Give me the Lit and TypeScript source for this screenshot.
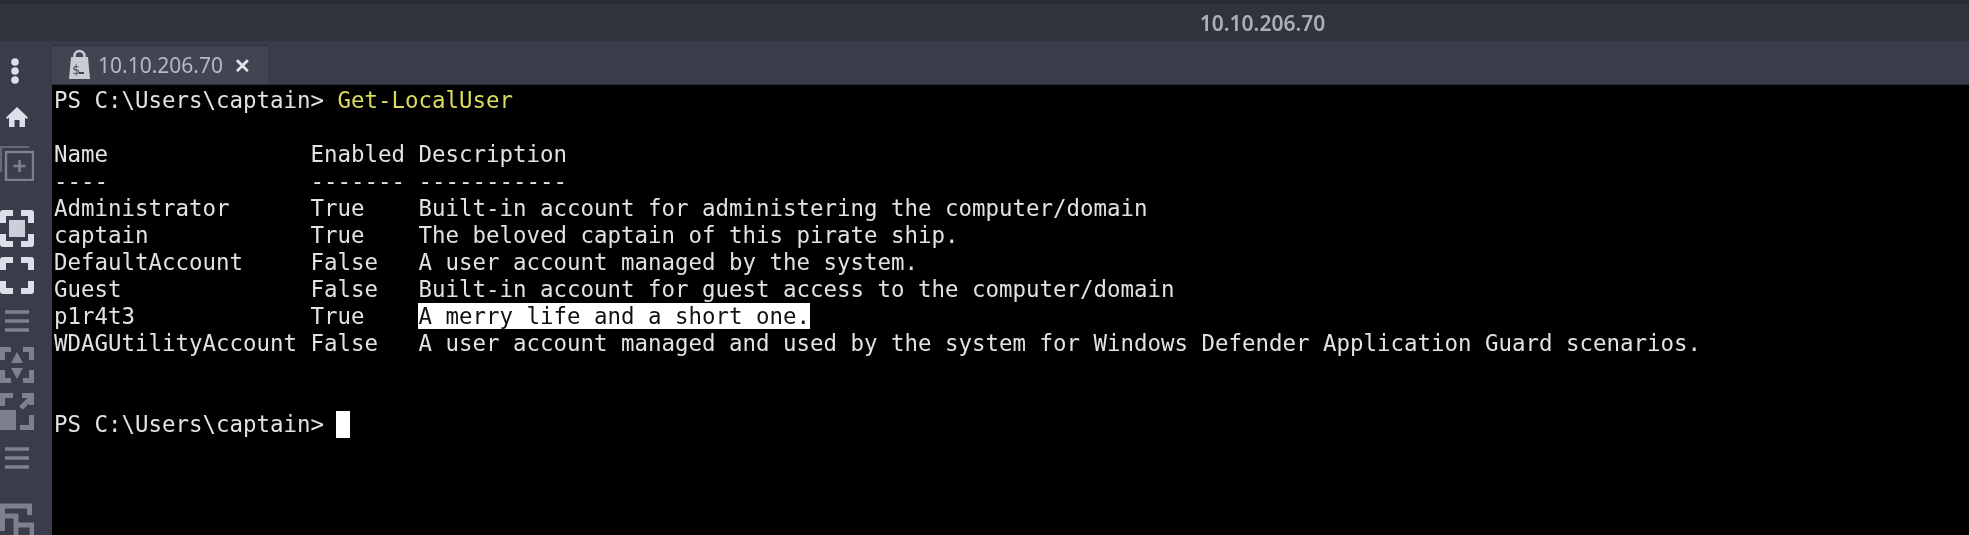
import { LitElement, html, css, svg } from "lit";
import { customElement } from "lit/decorators.js";

const bright = "#dcdfe7";
const dim = "#7d808d";

const corners = (c: string) => svg`<path fill="none" stroke="${c}" stroke-width="6" stroke-linejoin="round" d="M3 13V3H13M21 3H31V13M31 24V34H21M13 34H3V24"/>`;

const railIcons = [
  html`<svg class="shift" width="12" height="26" viewBox="0 0 12 26"><g fill="${bright}"><circle cx="6" cy="4" r="3.800"/><circle cx="6" cy="13" r="3.800"/><circle cx="6" cy="22" r="3.800"/></g></svg>`,
  html`<svg width="22" height="20" viewBox="0 0 22 20"><path fill="${bright}" d="M11 0 22 10.500 20.500 12 19 10.600V20H13.500V13H8.500V20H3V10.600L1.500 12 0 10.500Z"/></svg>`,
  html`<svg width="34" height="36" viewBox="0 0 34 36"><path fill="none" stroke="#656976" stroke-width="2" d="M1 27V2H29"/><rect x="6" y="7" width="27" height="28" fill="#3a3d4a" stroke="${dim}" stroke-width="2.400"/><path stroke="${dim}" stroke-width="2.600" d="M19.500 15V27M13.500 21H25.500"/></svg>`,
  html`<svg width="34" height="37" viewBox="0 0 34 37">${corners(bright)}<rect x="9" y="10" width="16" height="17" fill="${bright}" opacity=".9"/></svg>`,
  html`<svg width="34" height="37" viewBox="0 0 34 37">${corners(bright)}</svg>`,
  html`<svg width="24" height="22" viewBox="0 0 24 22"><path stroke="${dim}" stroke-width="3.400" d="M0 2H24M0 11H24M0 20H24"/></svg>`,
  html`<svg width="34" height="36" viewBox="0 0 34 36"><path fill="none" stroke="${dim}" stroke-width="5" d="M2.500 13V2.500H11M23 2.500H31.500V13M31.500 23V33.500H23M11 33.500H2.500V23"/><path fill="${dim}" d="M17 5 23 16H11ZM11 21H23L17 32Z"/></svg>`,
  html`<svg width="34" height="37" viewBox="0 0 34 37"><path fill="none" stroke="${dim}" stroke-width="5" d="M2.500 13V2.500H13M31.500 22V34.500H20"/><rect y="17" width="16" height="20" fill="${dim}"/><path fill="none" stroke="${dim}" stroke-width="5" d="M21 15 31 5M22 2.500H31.500V12"/></svg>`,
  html`<svg width="24" height="22" viewBox="0 0 24 22"><path stroke="${dim}" stroke-width="3.400" d="M0 2H24M0 11H24M0 20H24"/></svg>`,
  html`<svg width="34" height="32" viewBox="0 0 34 32"><path fill="none" stroke="${dim}" stroke-width="5" d="M2.500 28V3H29.500V12"/><path fill="none" stroke="${dim}" stroke-width="5" d="M5 13H16V32M18 22H32V32"/></svg>`,
];

const padRow = (name: string, enabled: string) => name.padEnd(19) + enabled.padEnd(8);

const rows = [
  ["Administrator", "True", "Built-in account for administering the computer/domain"],
  ["captain", "True", "The beloved captain of this pirate ship."],
  ["DefaultAccount", "False", "A user account managed by the system."],
  ["Guest", "False", "Built-in account for guest access to the computer/domain"],
  ["p1r4t3", "True", "A merry life and a short one."],
  ["WDAGUtilityAccount", "False", "A user account managed and used by the system for Windows Defender Application Guard scenarios."],
];

@customElement("app-root")
export class AppRoot extends LitElement {
  static styles = css`
    :host {
      display: block;
      width: 1969px;
      height: 535px;
      overflow: hidden;
      background: #000;
      font-family: "Noto Sans", sans-serif;
    }
    .titlebar {
      height: 37px;
      border-top: 4px solid #2a2c35;
      background: #30323c;
      display: flex;
      align-items: center;
      justify-content: center;
      color: #a9b0bc;
      font-size: 21px;
      font-weight: 600;
    }
    .title { margin-left: 556px; filter: blur(0.4px); }
    .body {
      height: 494px;
      display: grid;
      grid-template-columns: 52px 1fr;
      background: #393c4a;
    }
    .rail {
      display: grid;
      justify-items: center;
      align-items: start;
      box-sizing: border-box;
      padding: 17px 18px 0 0;
      grid-template-columns: 34px;
      grid-template-rows: 49px 38px 65px 47px 53px 37px 46px 54px 56px 40px;
      overflow: hidden;
      height: 494px;
      filter: blur(0.5px);
    }
    .rail svg { display: block; }
    .shift { margin-right: 4px; }
    .main { display: flex; flex-direction: column; min-width: 0; }
    .tabstrip {
      height: 43px;
      display: flex;
      align-items: flex-end;
      flex: none;
      border-bottom: 1px solid #2b2d37;
    }
    .tab {
      width: 216px;
      height: 39px;
      box-sizing: border-box;
      background: #414451;
      border-top: 1px solid #2f313b;
      display: flex;
      align-items: center;
      gap: 8px;
      padding-left: 17px;
      color: #b4bac5;
      font-size: 21px;
    }
    .tab > * { filter: blur(0.4px); }
    .close { color: #e3e5ea; font-size: 20px; font-weight: 700; margin-left: 3px; }
    .tab svg { display: block; margin-top: -2px; }
    .term {
      flex: 1;
      background: #000;
      margin: 0;
      padding: 2px 0 0 2px;
      color: #e2e2e2;
      font-family: "DejaVu Sans Mono", monospace;
      font-size: 22.43px;
      line-height: 27px;
      white-space: pre;
      overflow: hidden;
      filter: blur(0.45px);
    }
    .cmd { color: #dcdc5c; }
    .sel { background: #fff; color: #111; }
    .cursor {
      display: inline-block;
      width: 14px;
      height: 27px;
      background: #fff;
      vertical-align: -6px;
      margin-left: -1px;
    }
  `;

  render() {
    return html`
      <div class="titlebar"><span class="title">10.10.206.70</span></div>
      <div class="body">
        <nav class="rail">${railIcons.map((icon) => html`<div>${icon}</div>`)}</nav>
        <div class="main">
          <div class="tabstrip">
            <div class="tab">
              <svg width="21" height="31" viewBox="0 0 21 31"><path fill="none" stroke="#c9ccd3" stroke-width="2.500" d="M5.500 10V7a5 5 0 0 1 10 0v3"/><path fill="#c9ccd3" d="M2 8H19L21 30H0Z"/><path stroke="#414451" stroke-width="2" d="M10 24h5"/><text x="3" y="25" font-size="13" font-family="DejaVu Sans Mono" fill="#414451">$</text></svg>
              <span>10.10.206.70</span>
              <span class="close">✕</span>
            </div>
          </div>
          <pre class="term">PS C:\\Users\\captain&gt; <span class="cmd">Get-LocalUser</span>

${padRow("Name", "Enabled")}Description
${padRow("----", "-------")}-----------
${rows.map(([n, e, d]) =>
  d.startsWith("A merry")
    ? html`${padRow(n, e)}<span class="sel">${d}</span>\n`
    : html`${padRow(n, e)}${d}\n`
)}

PS C:\\Users\\captain&gt; <span class="cursor"></span></pre>
        </div>
      </div>
    `;
  }
}
